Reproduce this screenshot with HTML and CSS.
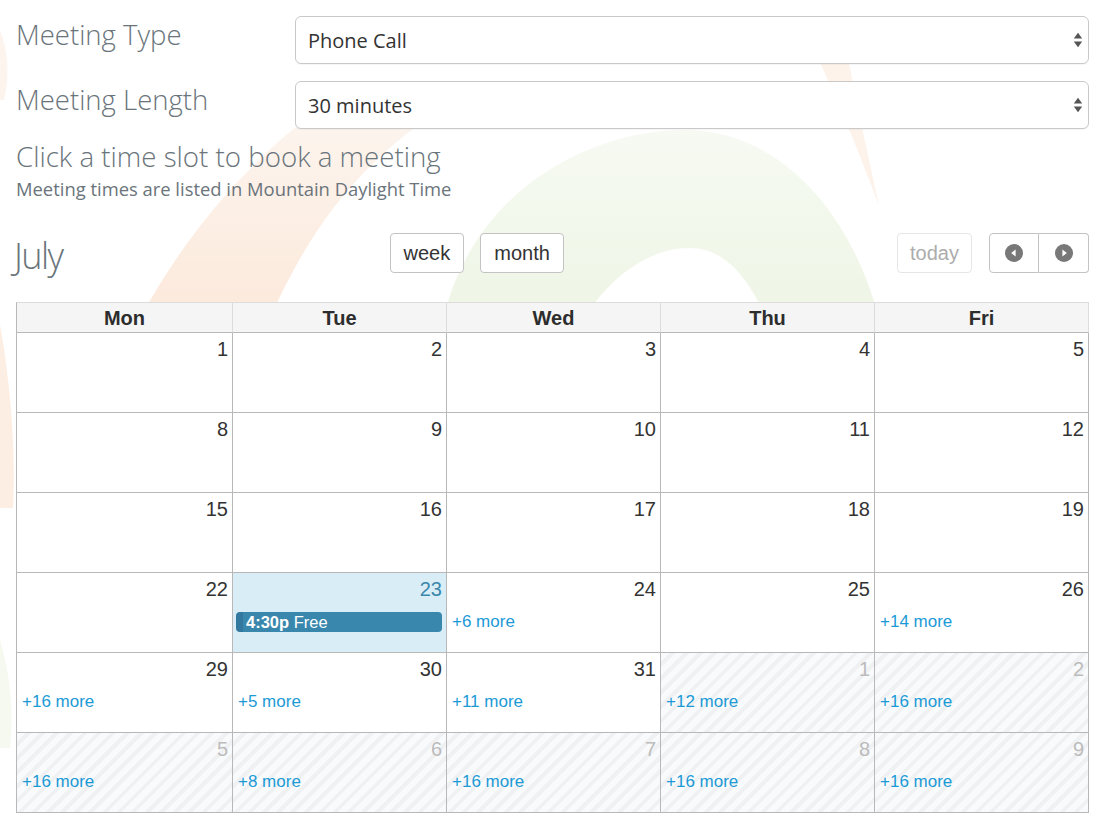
FILE: index.html
```html
<!DOCTYPE html>
<html lang="en">
<head>
<meta charset="utf-8">
<title>Book a meeting</title>
<link rel="stylesheet" href="styles.css">
</head>
<body>
<svg class="watermark" width="1100" height="830" viewBox="0 0 1100 830" aria-hidden="true">
  <defs>
    <linearGradient id="orangeGrad" x1="0" y1="1" x2="0" y2="0">
      <stop offset="0" stop-color="#fbe2cf"/>
      <stop offset="1" stop-color="#fdf3ec"/>
    </linearGradient>
    <linearGradient id="greenGrad" x1="0" y1="1" x2="0" y2="0">
      <stop offset="0" stop-color="#eaf3de"/>
      <stop offset="1" stop-color="#f4f9ef"/>
    </linearGradient>
  </defs>
  <path d="M140,318 C178,250 232,172 330,100 L455,100 C375,150 318,210 270,318 Z" fill="url(#orangeGrad)"/>
  <path d="M0,325 C10,380 16,450 13,508 L0,508 Z" fill="#fde9da"/>
  <path d="M0,30 C8,50 10,75 4,100 L0,100 Z" fill="#fdf1e8"/>
  <path d="M0,640 C10,675 14,710 10,748 L0,748 Z" fill="#f2f8ec"/>
  <path d="M447,305 C480,190 590,128 690,130 C790,134 852,225 875,305 L760,305 C742,270 720,248 690,248 C652,248 618,272 593,305 Z" fill="url(#greenGrad)"/>
  <path d="M818,58 L848,58 C860,120 871,168 879,206 C862,160 842,110 818,58 Z" fill="#fdefe5"/>
</svg>

<main class="page">
  <div class="field-row">
    <label class="field-label" for="mtype">Meeting Type</label>
    <div class="select-wrap">
      <select id="mtype" class="select">
        <option>Phone Call</option>
      </select>
      <svg class="select-arrows" width="10" height="18" viewBox="0 0 10 18" aria-hidden="true">
        <path d="M0.8,7.5 L5,1.8 L9.2,7.5 Z" fill="#555"/>
        <path d="M0.8,10.5 L9.2,10.5 L5,16.2 Z" fill="#555"/>
      </svg>
    </div>
  </div>
  <div class="field-row">
    <label class="field-label" for="mlen">Meeting Length</label>
    <div class="select-wrap">
      <select id="mlen" class="select">
        <option>30 minutes</option>
      </select>
      <svg class="select-arrows" width="10" height="18" viewBox="0 0 10 18" aria-hidden="true">
        <path d="M0.8,7.5 L5,1.8 L9.2,7.5 Z" fill="#555"/>
        <path d="M0.8,10.5 L9.2,10.5 L5,16.2 Z" fill="#555"/>
      </svg>
    </div>
  </div>

  <h2 class="prompt">Click a time slot to book a meeting</h2>
  <p class="tz-note">Meeting times are listed in Mountain Daylight Time</p>

  <div class="toolbar">
    <h1 class="month-title">July</h1>
    <div class="view-switch">
      <button class="btn">week</button>
      <button class="btn">month</button>
    </div>
    <div class="nav">
      <button class="btn btn-today" disabled>today</button>
      <div class="btn-group">
        <button class="btn btn-icon" aria-label="prev">
          <svg width="18" height="18" viewBox="0 0 18 18"><circle cx="9" cy="9" r="9" fill="#787878"/><path d="M10.6,5.4 L10.6,12.6 L6.2,9 Z" fill="#fff"/></svg>
        </button>
        <button class="btn btn-icon" aria-label="next">
          <svg width="18" height="18" viewBox="0 0 18 18"><circle cx="9" cy="9" r="9" fill="#787878"/><path d="M7.4,5.4 L7.4,12.6 L11.8,9 Z" fill="#fff"/></svg>
        </button>
      </div>
    </div>
  </div>

  <div class="calendar">
    <div class="head">Mon</div>
    <div class="head">Tue</div>
    <div class="head">Wed</div>
    <div class="head">Thu</div>
    <div class="head">Fri</div>

    <div class="day"><div class="num">1</div></div>
    <div class="day"><div class="num">2</div></div>
    <div class="day"><div class="num">3</div></div>
    <div class="day"><div class="num">4</div></div>
    <div class="day"><div class="num">5</div></div>

    <div class="day"><div class="num">8</div></div>
    <div class="day"><div class="num">9</div></div>
    <div class="day"><div class="num">10</div></div>
    <div class="day"><div class="num">11</div></div>
    <div class="day"><div class="num">12</div></div>

    <div class="day"><div class="num">15</div></div>
    <div class="day"><div class="num">16</div></div>
    <div class="day"><div class="num">17</div></div>
    <div class="day"><div class="num">18</div></div>
    <div class="day"><div class="num">19</div></div>

    <div class="day"><div class="num">22</div></div>
    <div class="day today"><div class="num">23</div><div class="event"><b>4:30p</b> Free</div></div>
    <div class="day"><div class="num">24</div><a class="more">+6 more</a></div>
    <div class="day"><div class="num">25</div></div>
    <div class="day"><div class="num">26</div><a class="more">+14 more</a></div>

    <div class="day"><div class="num">29</div><a class="more">+16 more</a></div>
    <div class="day"><div class="num">30</div><a class="more">+5 more</a></div>
    <div class="day"><div class="num">31</div><a class="more">+11 more</a></div>
    <div class="day other"><div class="num">1</div><a class="more">+12 more</a></div>
    <div class="day other"><div class="num">2</div><a class="more">+16 more</a></div>

    <div class="day other"><div class="num">5</div><a class="more">+16 more</a></div>
    <div class="day other"><div class="num">6</div><a class="more">+8 more</a></div>
    <div class="day other"><div class="num">7</div><a class="more">+16 more</a></div>
    <div class="day other"><div class="num">8</div><a class="more">+16 more</a></div>
    <div class="day other"><div class="num">9</div><a class="more">+16 more</a></div>
  </div>
</main>
</body>
</html>
```

FILE: styles.css
```css
html, body {
  margin: 0;
  padding: 0;
  background: #fff;
}

body {
  position: relative;
  width: 1100px;
  min-height: 830px;
  font-family: "Liberation Sans", Arial, sans-serif;
  color: #333;
}

.watermark {
  position: absolute;
  left: 0;
  top: 0;
  z-index: 0;
  opacity: 0.75;
  pointer-events: none;
}

.page {
  position: relative;
  z-index: 1;
  width: 1073px;
  margin-left: 16px;
  padding-top: 16px;
}

/* form rows */
.field-row {
  display: flex;
  align-items: flex-start;
  margin-bottom: 17px;
}

.field-row + .field-row {
  margin-bottom: 10px;
}

.field-label {
  width: 279px;
  flex: none;
  font-family: "Open Sans", sans-serif;
  font-weight: 300;
  font-size: 27.5px;
  line-height: 38px;
  color: #6a747b;
}

.select-wrap {
  position: relative;
  flex: 1;
}

.select {
  display: block;
  width: 100%;
  height: 48px;
  margin: 0;
  padding: 0 40px 0 12px;
  border: 1px solid #c9c9c9;
  border-radius: 6px;
  background: #fff;
  font-family: "Open Sans", sans-serif;
  font-size: 20px;
  color: #333;
  appearance: none;
  -webkit-appearance: none;
  box-shadow: 0 1px 1px rgba(0, 0, 0, 0.04);
}

.select-arrows {
  position: absolute;
  right: 6px;
  top: 15px;
}

/* prompt */
.prompt {
  margin: 0;
  font-family: "Open Sans", sans-serif;
  font-weight: 300;
  font-size: 27.7px;
  line-height: 34px;
  color: #6a747b;
}

.tz-note {
  margin: 4px 0 0;
  font-family: "Open Sans", sans-serif;
  font-weight: 400;
  font-size: 18.4px;
  line-height: 24px;
  color: #6a747b;
}

/* toolbar */
.toolbar {
  display: flex;
  align-items: flex-start;
  margin-top: 32px;
  margin-bottom: 23px;
}

.month-title {
  margin: 0 0 0 -2px;
  font-family: "Open Sans", sans-serif;
  font-weight: 300;
  font-size: 36px;
  line-height: 46px;
  color: #6a747b;
  letter-spacing: -1.6px;
}

.view-switch {
  flex: 1;
  display: flex;
  justify-content: center;
  gap: 16px;
  padding-right: 6px;
}

.nav {
  display: flex;
  gap: 17px;
}

.btn {
  height: 40px;
  margin: 0;
  padding: 0 13px;
  border: 1px solid #c3c3c3;
  border-radius: 4px;
  background: #fff;
  font-family: "Liberation Sans", Arial, sans-serif;
  font-size: 20px;
  color: #333;
  line-height: 38px;
}

.btn-today {
  width: 75px;
  padding: 0;
  border-color: #e6e6e6;
  color: #acacac;
}

.btn-group {
  display: flex;
}

.btn-icon {
  width: 50px;
  padding: 0;
  display: flex;
  align-items: center;
  justify-content: center;
}

.btn-group .btn-icon:first-child {
  border-radius: 4px 0 0 4px;
}

.btn-group .btn-icon:last-child {
  border-left: 0;
  width: 50px;
  border-radius: 0 4px 4px 0;
}

/* calendar */
.calendar {
  display: grid;
  grid-template-columns: 216px repeat(4, 214px);
  grid-template-rows: 30px repeat(6, 80px);
  border-top: 1px solid #dcdcdc;
  border-left: 1px solid #b8b8b8;
  background: #fff;
}

.head {
  background: #f5f5f5;
  border-right: 1px solid #dcdcdc;
  border-bottom: 1px solid #b8b8b8;
  font-weight: bold;
  font-size: 20px;
  line-height: 30px;
  text-align: center;
  color: #2d2d2d;
}

.day {
  border-right: 1px solid #b8b8b8;
  border-bottom: 1px solid #b8b8b8;
  background: #fff;
  min-width: 0;
}

.num {
  padding: 3px 4px 0 0;
  height: 26px;
  line-height: 26px;
  font-size: 20px;
  text-align: right;
  color: #333;
  margin-bottom: 10px;
}

.today {
  background: #d9edf7;
}

.today .num {
  color: #3a87ad;
}

.other {
  background: repeating-linear-gradient(135deg, #f9fafb 0 6px, #f0f1f3 6px 10px);
}

.other .num {
  color: #bcbcbc;
}

.more {
  display: block;
  padding-left: 5px;
  font-size: 17px;
  line-height: 20px;
  color: #1c9ad6;
  text-decoration: none;
}

.event {
  margin: 0 4px 0 3px;
  height: 20px;
  padding-left: 10px;
  border-radius: 4px;
  background: linear-gradient(90deg, #33789f 0 7px, #3a87ad 7px);
  color: #fff;
  font-size: 16.5px;
  line-height: 20px;
  white-space: nowrap;
  overflow: hidden;
}

.event b {
  font-weight: bold;
}
```
